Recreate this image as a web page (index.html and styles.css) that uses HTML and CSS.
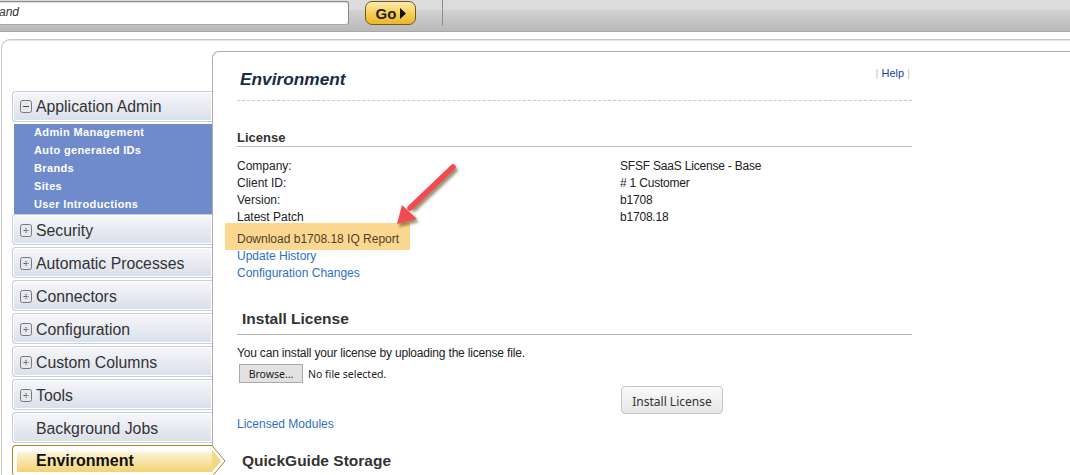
FILE: index.html
```html
<!DOCTYPE html>
<html lang="en">
<head>
<meta charset="utf-8">
<title>Environment</title>
<link rel="stylesheet" href="styles.css">
</head>
<body>
<header class="topbar">
  <div class="search"><span class="search-text">and</span></div>
  <button class="go" type="button">Go<svg class="go-arrow" width="6" height="11" viewBox="0 0 6 11"><path d="M0 0L6 5.5L0 11Z" fill="#111"/></svg></button>
  <div class="top-sep"></div>
</header>
<div class="shell">
  <nav class="sidebar">
    <a class="item"><svg class="tree" width="12" height="13" viewBox="0 0 12 13"><rect x=".5" y=".5" width="11" height="12" rx="2" fill="#e6e8ec" stroke="#77797d"/><path d="M3 6.5H9" stroke="#444" stroke-width="1"/></svg>Application Admin</a>
    <ul class="sublist">
      <li>Admin Management</li>
      <li>Auto generated IDs</li>
      <li>Brands</li>
      <li>Sites</li>
      <li>User Introductions</li>
    </ul>
    <a class="item"><svg class="tree" width="12" height="13" viewBox="0 0 12 13"><rect x=".5" y=".5" width="11" height="12" rx="2" fill="#e6e8ec" stroke="#77797d"/><path d="M3.5 6.5H8.5M6 4V9" stroke="#555" stroke-width="1" stroke-dasharray="1.5 .6"/></svg>Security</a>
    <a class="item"><svg class="tree" width="12" height="13" viewBox="0 0 12 13"><rect x=".5" y=".5" width="11" height="12" rx="2" fill="#e6e8ec" stroke="#77797d"/><path d="M3.5 6.5H8.5M6 4V9" stroke="#555" stroke-width="1" stroke-dasharray="1.5 .6"/></svg>Automatic Processes</a>
    <a class="item"><svg class="tree" width="12" height="13" viewBox="0 0 12 13"><rect x=".5" y=".5" width="11" height="12" rx="2" fill="#e6e8ec" stroke="#77797d"/><path d="M3.5 6.5H8.5M6 4V9" stroke="#555" stroke-width="1" stroke-dasharray="1.5 .6"/></svg>Connectors</a>
    <a class="item"><svg class="tree" width="12" height="13" viewBox="0 0 12 13"><rect x=".5" y=".5" width="11" height="12" rx="2" fill="#e6e8ec" stroke="#77797d"/><path d="M3.5 6.5H8.5M6 4V9" stroke="#555" stroke-width="1" stroke-dasharray="1.5 .6"/></svg>Configuration</a>
    <a class="item"><svg class="tree" width="12" height="13" viewBox="0 0 12 13"><rect x=".5" y=".5" width="11" height="12" rx="2" fill="#e6e8ec" stroke="#77797d"/><path d="M3.5 6.5H8.5M6 4V9" stroke="#555" stroke-width="1" stroke-dasharray="1.5 .6"/></svg>Custom Columns</a>
    <a class="item"><svg class="tree" width="12" height="13" viewBox="0 0 12 13"><rect x=".5" y=".5" width="11" height="12" rx="2" fill="#e6e8ec" stroke="#77797d"/><path d="M3.5 6.5H8.5M6 4V9" stroke="#555" stroke-width="1" stroke-dasharray="1.5 .6"/></svg>Tools</a>
    <a class="item item-plain">Background Jobs</a>
    <a class="item item-active">Environment<svg class="pointer" width="14" height="32" viewBox="0 0 14 32"><path d="M0 0.5L13 16L0 31.5" fill="#fff" stroke="#a8861e"/><path d="M0 5L9 16L0 27Z" fill="#f3d883"/></svg></a>
  </nav>
  <main class="main">
    <div class="title-row">
      <h1 class="title">Environment</h1>
      <div class="help"><span class="pipe">|</span> <a>Help</a> <span class="pipe">|</span></div>
    </div>
    <h2 class="head-small">License</h2>
    <dl class="facts">
      <dt>Company:</dt><dd>SFSF SaaS License - Base</dd>
      <dt>Client ID:</dt><dd># 1 Customer</dd>
      <dt>Version:</dt><dd>b1708</dd>
      <dt>Latest Patch</dt><dd>b1708.18</dd>
    </dl>
    <div class="highlight">Download b1708.18 IQ Report</div>
    <div class="links">
      <a>Update History</a>
      <a>Configuration Changes</a>
    </div>
    <h2 class="head-large head-install">Install License</h2>
    <p class="hint">You can install your license by uploading the license file.</p>
    <div class="file-row"><button class="browse" type="button">Browse...</button><span class="file-name">No file selected.</span></div>
    <button class="install" type="button">Install License</button>
    <a class="modules">Licensed Modules</a>
    <h2 class="head-large head-guide">QuickGuide Storage</h2>
    <svg class="callout" width="80" height="80" viewBox="0 0 80 80">
      <defs><filter id="sh" x="-30%" y="-30%" width="160%" height="160%"><feGaussianBlur stdDeviation="1.5"/></filter></defs>
      <g filter="url(#sh)" opacity=".55" transform="translate(2 3)" fill="#4a3000"><path d="M63 7L22 46" stroke="#4a3000" stroke-width="5.5" stroke-linecap="round"/><path d="M7 64L12 45L27 59Z"/></g>
      <path d="M63 7L20 48" stroke="#f34a52" stroke-width="5.5" stroke-linecap="round"/>
      <path d="M7 64L12 45L27 59Z" fill="#f34a52"/>
    </svg>
  </main>
</div>
</body>
</html>
```
FILE: styles.css
```css
* { box-sizing: border-box; }
html, body { margin: 0; height: 475px; overflow: hidden; background: #fff; }
body { font-family: "Liberation Sans", Arial, sans-serif; font-size: 12px; color: #222; }

.topbar {
  height: 32px;
  display: flex;
  align-items: flex-start;
  background: linear-gradient(#dcdcdc 0, #dcdcdc 10px, #d2d2d2 10px, #b9b9b9 31px);
  border-bottom: 1px solid #a8a8a8;
}
.search {
  width: 349px;
  height: 24px;
  margin-top: 1px;
  background: #fff;
  border: 1px solid #8a8a8a;
  border-left: 0;
  border-bottom-color: #a8a8a8;
  border-radius: 0 3px 3px 0;
  box-shadow: inset 0 1px 1px #ddd;
  line-height: 21px;
  font-style: italic;
  font-size: 12px;
  color: #333;
}
.search-text { margin-left: -1px; display: block; }
.go {
  width: 51px;
  height: 24px;
  margin: 1px 0 0 16px;
  padding: 0 0 0 1px;
  display: flex;
  align-items: center;
  justify-content: center;
  gap: 4px;
  border: 1px solid #6e5a20;
  border-radius: 7px;
  background: linear-gradient(#fbeab0 0, #f8d667 40%, #edb52a 100%);
  font: bold 15px "Liberation Sans", sans-serif;
  color: #222;
}
.top-sep { width: 1px; height: 26px; margin-left: 26px; background: #8c8c8c; }

.shell {
  margin: 7px 0 0 1px;
  height: 436px;
  display: flex;
  align-items: flex-start;
  padding: 11px 0 0 10px;
  border-top: 1px solid #c8c8c8;
  border-left: 1px solid #c8c8c8;
  border-top-left-radius: 9px;
  box-shadow: inset 0 1px 0 #e6e6e6;
}
.sidebar {
  position: relative;
  z-index: 2;
  width: 200px;
  flex: none;
  padding-top: 40px;
}
.item {
  display: flex;
  align-items: center;
  gap: 4px;
  height: 31px;
  margin-bottom: 2px;
  padding: 2px 0 0 7px;
  border: 1px solid #c3cee2;
  border-right: 0;
  border-radius: 4px 0 0 4px;
  background: linear-gradient(#f6f7fa 0, #e9ecf2 45%, #d9e0ea 100%);
  box-shadow: inset 0 0 0 1px #fff;
  font-size: 15.8px;
  color: #333;
}
.item:first-child { padding-top: 0; }
.item-plain { padding-left: 23px; }
.sublist {
  list-style: none;
  height: 90px;
  margin: 0 0 0 2px;
  padding: 0 0 0 20px;
  background: #6f8bcb;
  color: #fff;
  font-weight: bold;
  font-size: 11px;
  letter-spacing: .36px;
  line-height: 18px;
  position: relative;
}
.sublist li { position: relative; top: -1px; }
.item-active {
  position: relative;
  padding: 0 0 0 23px;
  border: 1px solid #a8861e;
  border-right: 0;
  border-bottom: 0;
  background: linear-gradient(#fff 0, #fff 4px, #fbf0cb 8px, #f3d273 26px, #fff 26px);
  box-shadow: inset 4px 0 0 #fff;
  font-size: 16px;
  font-weight: bold;
  color: #111;
}
.pointer { position: absolute; left: 199px; top: -1px; }

.main {
  position: relative;
  flex: none;
  width: 900px;
  height: 430px;
  padding-left: 24px;
  border: 1px solid #adadad;
  border-radius: 7px 0 0 0;
  border-width: 1px 0 0 1px;
  background: #fff;
}
.title-row {
  width: 675px;
  height: 49px;
  display: flex;
  justify-content: space-between;
  align-items: flex-start;
  border-bottom: 1px dashed #b9cde6;
}
.title {
  margin: 16px 0 0 3px;
  font-size: 17.3px;
  line-height: 22px;
  font-style: italic;
  font-weight: bold;
  color: #1b2a45;
}
.help { margin: 13px 2px 0 0; font-size: 11px; line-height: 16px; color: #2044a8; }
.pipe { color: #d8c0b0; }

.head-small {
  width: 675px;
  margin: 0;
  padding-top: 28px;
  font-size: 13px;
  line-height: 17px;
  color: #333;
  border-bottom: 1px solid #afbccf;
}
.facts {
  display: grid;
  grid-template-columns: 383px 1fr;
  margin: 11px 0 0;
  line-height: 17px;
}
.facts dt, .facts dd { margin: 0; }
.facts dd { letter-spacing: -.2px; }
.highlight {
  width: 185px;
  height: 27px;
  margin: -3px 0 -2px -12px;
  padding: 8px 0 0 12px;
  line-height: 17px;
  background: #fbd78f;
  color: #4f3f30;
}
.links a { display: block; line-height: 16px; color: #2f6fc4; }
.links a + a { margin-top: 1px; }
.head-large {
  width: 675px;
  margin: 0;
  padding-left: 5px;
  font-size: 15.5px;
  line-height: 18px;
  color: #333;
}
.head-install { margin-top: 29px; padding-bottom: 6px; border-bottom: 1px solid #b0b0b0; }
.hint { margin: 10px 0 0; line-height: 17px; color: #222; letter-spacing: -.18px; }
.file-row { display: flex; align-items: center; margin-top: 2px; padding-left: 2px; }
.browse {
  width: 64px;
  height: 19px;
  padding: 0;
  border: 1px solid #a9a9a9;
  background: #e1e1e1;
  font: 10.5px "Noto Sans", sans-serif;
  color: #222;
}
.file-name { margin-left: 5px; font: 10.5px "Noto Sans", sans-serif; color: #222; }
.install {
  display: block;
  width: 102px;
  height: 28px;
  margin: 3px 0 0 384px;
  padding: 2px 0 0;
  border: 1px solid #c4c4c4;
  border-radius: 4px;
  background: linear-gradient(#fafafa, #e6e6e6);
  font: 12px "Noto Sans", sans-serif;
  color: #333;
}
.modules { display: block; margin-top: 2px; line-height: 16px; color: #2f6fc4; }
.head-guide { margin-top: 20px; }
.callout { position: absolute; left: 177px; top: 108px; }
```
